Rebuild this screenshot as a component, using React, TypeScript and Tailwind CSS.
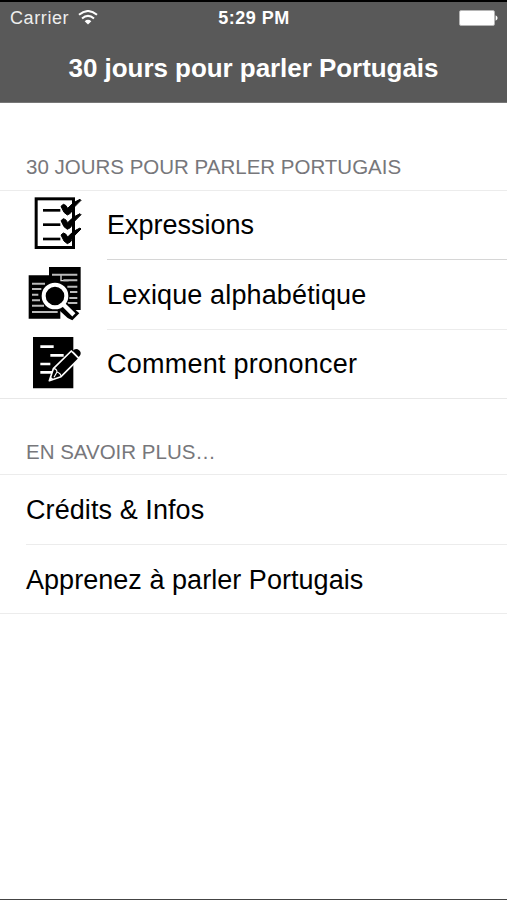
import React from 'react'

function WifiIcon() {
    return (
        <svg viewBox="0 0 60 44" className="w-5 h-[15px] ml-[9px] -mt-0.5" fill="none" stroke="#fff" strokeWidth="6">
            <path d="M3 14 Q30 -9 57 14" />
            <path d="M12 25 Q30 9 48 25" />
            <path d="M20 33 Q30 25 40 33 L30 43 Z" fill="#fff" stroke="none" />
        </svg>
    )
}

function BatteryIcon() {
    return (
        <svg viewBox="0 0 39 16" className="w-[39px] h-4">
            <rect x="0.5" y="0.5" width="35" height="15" rx="1.5" fill="#fff" stroke="#b8b8b8" strokeWidth="0.8" />
            <path d="M36.6 5.2 Q38.6 6.5 38.6 8 Q38.6 9.5 36.6 10.8 Z" fill="#fff" />
        </svg>
    )
}

function ChecklistIcon() {
    return (
        <svg viewBox="12 18 180 204" className="w-[60px] h-[68px]">
            <rect x="48.5" y="41.5" width="112" height="146" fill="#fff" stroke="#000" strokeWidth="9" />
            {[76, 119, 162].map((y) => (
                <g key={y} transform={`translate(0 ${y})`}>
                    <path d="M69 0 H121" stroke="#000" strokeWidth="8" />
                    <path
                        d="M123 -12 L130 -18 L137 -15 L143 -6 Q160 -26 180 -33 L183 -30 Q162 -12 151 9 L142 14 L132 6 Z"
                        fill="#000"
                        stroke="#000"
                        strokeWidth="3"
                    />
                </g>
            ))}
        </svg>
    )
}

function SearchDocsIcon() {
    return (
        <svg viewBox="12 6 180 207" className="w-[60px] h-[69px]">
            <path d="M87 27 H182 V156 H87 Z" fill="#000" />
            <path d="M26 52 H121 V182 H26 Z" fill="#000" />
            <path d="M123 51 V68 H146" fill="none" stroke="#ddd" strokeWidth="4" />
            <g stroke="#bbb" strokeWidth="6">
                <path d="M96 50 H172 M130 67 H172 M142 86 H172 M150 102 H172 M148 120 H172 M143 135 H172" />
                <path d="M36 77 H75 M36 93 H64 M36 110 H55 M36 127 H60 M36 143 H72 M36 162 H113" />
            </g>
            <path d="M112 150 L136 130 L178 166 L157 187 L143 180 L121 160 Z" fill="#000" />
            <path d="M134 143 L157 166" stroke="#fff" strokeWidth="13" strokeLinecap="square" />
            <circle cx="105" cy="114" r="34" fill="#000" stroke="#fff" strokeWidth="12" />
        </svg>
    )
}

function WriteIcon() {
    return (
        <svg viewBox="12 6 180 204" className="w-[60px] h-[68px]">
            <path d="M39 27 H160 V181 H39 Z" fill="#000" />
            <path d="M61 56 H101 M91 82 H131 M61 108 H91 M61 133 H96" stroke="#fff" strokeWidth="8" />
            <path d="M88 158 L100 122 L154 69 L177 92 L123 146 Z" fill="#000" stroke="#fff" strokeWidth="5" strokeLinejoin="round" />
            <path d="M101 122 Q110 122 111 132 Q123 136 123 146 M111 132 L102 148" fill="none" stroke="#fff" strokeWidth="3.5" />
            <path d="M88 158 L92 146 L99 152 Z" fill="#fff" />
            <path d="M158 68 Q165 61 173 64 Q183 69 182 78 Q181 83 176 87 Z" fill="#000" />
        </svg>
    )
}

const lessons = [
    { label: 'Expressions', icon: <ChecklistIcon />, row: 'h-[69px] border-[#d6d6d6] pt-[18px]' },
    { label: 'Lexique alphabétique', icon: <SearchDocsIcon />, row: 'h-[70px] border-[#ececec] pt-[19px] tracking-[0.13px]' },
    { label: 'Comment prononcer', icon: <WriteIcon />, row: 'h-[68px] border-transparent pt-[18px] tracking-[0.24px]' },
]

function App() {
    return (
        <div className="w-full h-[900px] flex flex-col bg-white border-t-2 border-t-black border-b border-b-[#444] font-['Liberation_Sans',Arial,sans-serif] text-black">
            <header className="h-[101px] shrink-0 bg-[#595959] border-b border-[#777] text-white">
                <div className="h-8 grid grid-cols-3 items-center pl-[10px] pr-[9px]">
                    <div className="flex items-center">
                        <span className="text-[18px] tracking-[0.6px] text-[#eee]">Carrier</span>
                        <WifiIcon />
                    </div>
                    <span className="text-center text-[18px] font-bold tracking-[0.5px]">5:29 PM</span>
                    <div className="flex justify-end">
                        <BatteryIcon />
                    </div>
                </div>
                <h1 className="mt-[18px] text-center text-[26px] leading-8 font-bold tracking-[-0.05px] whitespace-nowrap">
                    30 jours pour parler Portugais
                </h1>
            </header>

            <section>
                <h2 className="h-[88px] pt-[50px] pl-[26px] border-b border-[#ececec] text-[20.5px] leading-7 text-[#77777b] whitespace-nowrap">
                    30 JOURS POUR PARLER PORTUGAIS
                </h2>
                <ul className="border-b border-[#e8e8e8]">
                    {lessons.map((item) => (
                        <li key={item.label} className="flex pl-6">
                            <div className="w-[83px] h-[68px] shrink-0">{item.icon}</div>
                            <div className={`flex-1 border-b text-[27px] leading-8 whitespace-nowrap ${item.row}`}>
                                {item.label}
                            </div>
                        </li>
                    ))}
                </ul>
            </section>

            <section>
                <h2 className="h-[76px] pt-[39px] pl-[26px] border-b border-[#ececec] text-[20.5px] leading-7 text-[#77777b]">
                    EN SAVOIR PLUS…
                </h2>
                <ul className="border-b border-[#ececec]">
                    <li className="h-[70px] ml-[26px] pt-[19px] border-b border-[#ececec] text-[27px] leading-8 tracking-[0.08px]">
                        Crédits &amp; Infos
                    </li>
                    <li className="h-[68px] ml-[26px] pt-[19px] text-[27px] leading-8 tracking-[0.04px]">Apprenez à parler Portugais</li>
                </ul>
            </section>
        </div>
    )
}

export default App
